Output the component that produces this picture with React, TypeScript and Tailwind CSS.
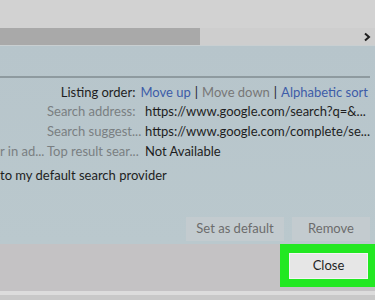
export default function App() {
  const font = { fontFamily: 'Lato, "Noto Sans", sans-serif' };
  return (
    <div
      className="flex h-[300px] w-[375px] flex-col overflow-hidden whitespace-nowrap bg-[#c4c2c4] text-[13px] text-[#1e1e1e]"
      style={font}
    >
      <div className="h-[28px] shrink-0 bg-[#d2d2d2]" />
      <div className="flex h-[18px] shrink-0 border-b border-[#c9cfd1]">
        <div className="w-[200px] bg-[#a9a9a9]" />
        <div className="flex flex-1 items-center justify-end bg-[#cecece] pr-[4px]">
          <svg width="8" height="10" viewBox="0 0 8 10">
            <path d="M2 1.5 L6 5 L2 8.5" fill="none" stroke="#1f1f1f" strokeWidth="2" />
          </svg>
        </div>
      </div>

      <div className="flex h-[198px] shrink-0 flex-col bg-gradient-to-b from-[#b7c5cb] to-[#bac8cd] pt-[30px]">
        <div className="h-[2px] w-[370px] bg-[#8e9a9f]" />
        <div className="mt-[5px] flex justify-end pr-[7px] leading-[18px]">
          <span>Listing order:</span>
          <span className="ml-[5px] text-[#3d5ca8]">Move up</span>
          <span className="mx-[4px]">|</span>
          <span className="text-[#777]">Move down</span>
          <span className="mx-[4px]">|</span>
          <span className="text-[#3d5ca8]">Alphabetic sort</span>
        </div>
        <div className="flex flex-col leading-[20px]">
          <div className="flex pl-[47px]">
            <span className="w-[98px] text-[#7a7f82]">Search address:</span>
            <span>https://www.google.com/search?q=&amp;...</span>
          </div>
          <div className="flex pl-[47px]">
            <span className="w-[98px] text-[#7a7f82]">Search suggest...</span>
            <span>https://www.google.com/complete/se...</span>
          </div>
          <div className="flex">
            <span className="w-[47px] overflow-hidden text-[#7a7f82]">r in ad...</span>
            <span className="w-[98px] text-[#7a7f82]">Top result sear...</span>
            <span>Not Available</span>
          </div>
        </div>
        <div className="mt-[4px] leading-[20px]">to my default search provider</div>
        <div className="mt-[32px] flex justify-end gap-[8px] pr-[5px] text-[#6c6c6c]">
          <div className="flex h-[24px] w-[98px] items-center justify-center bg-[#c3cbcf]">
            Set as default
          </div>
          <div className="flex h-[24px] w-[78px] items-center justify-center bg-[#c3cbcf]">
            Remove
          </div>
        </div>
      </div>

      <div className="flex h-[47px] shrink-0 justify-end">
        <div className="flex h-[43px] w-[95px] items-center justify-center bg-[#22e822] pl-[2px]">
          <div className="flex h-[26px] w-[79px] items-center justify-center border border-[#f4f4f4] bg-[#e6e6e6] text-[#1e1e1e]">
            Close
          </div>
        </div>
      </div>
      <div className="h-[4px] shrink-0 bg-[#dcdcdc]" />
      <div className="flex-1 bg-[#c8c8c8]" />
    </div>
  );
}
